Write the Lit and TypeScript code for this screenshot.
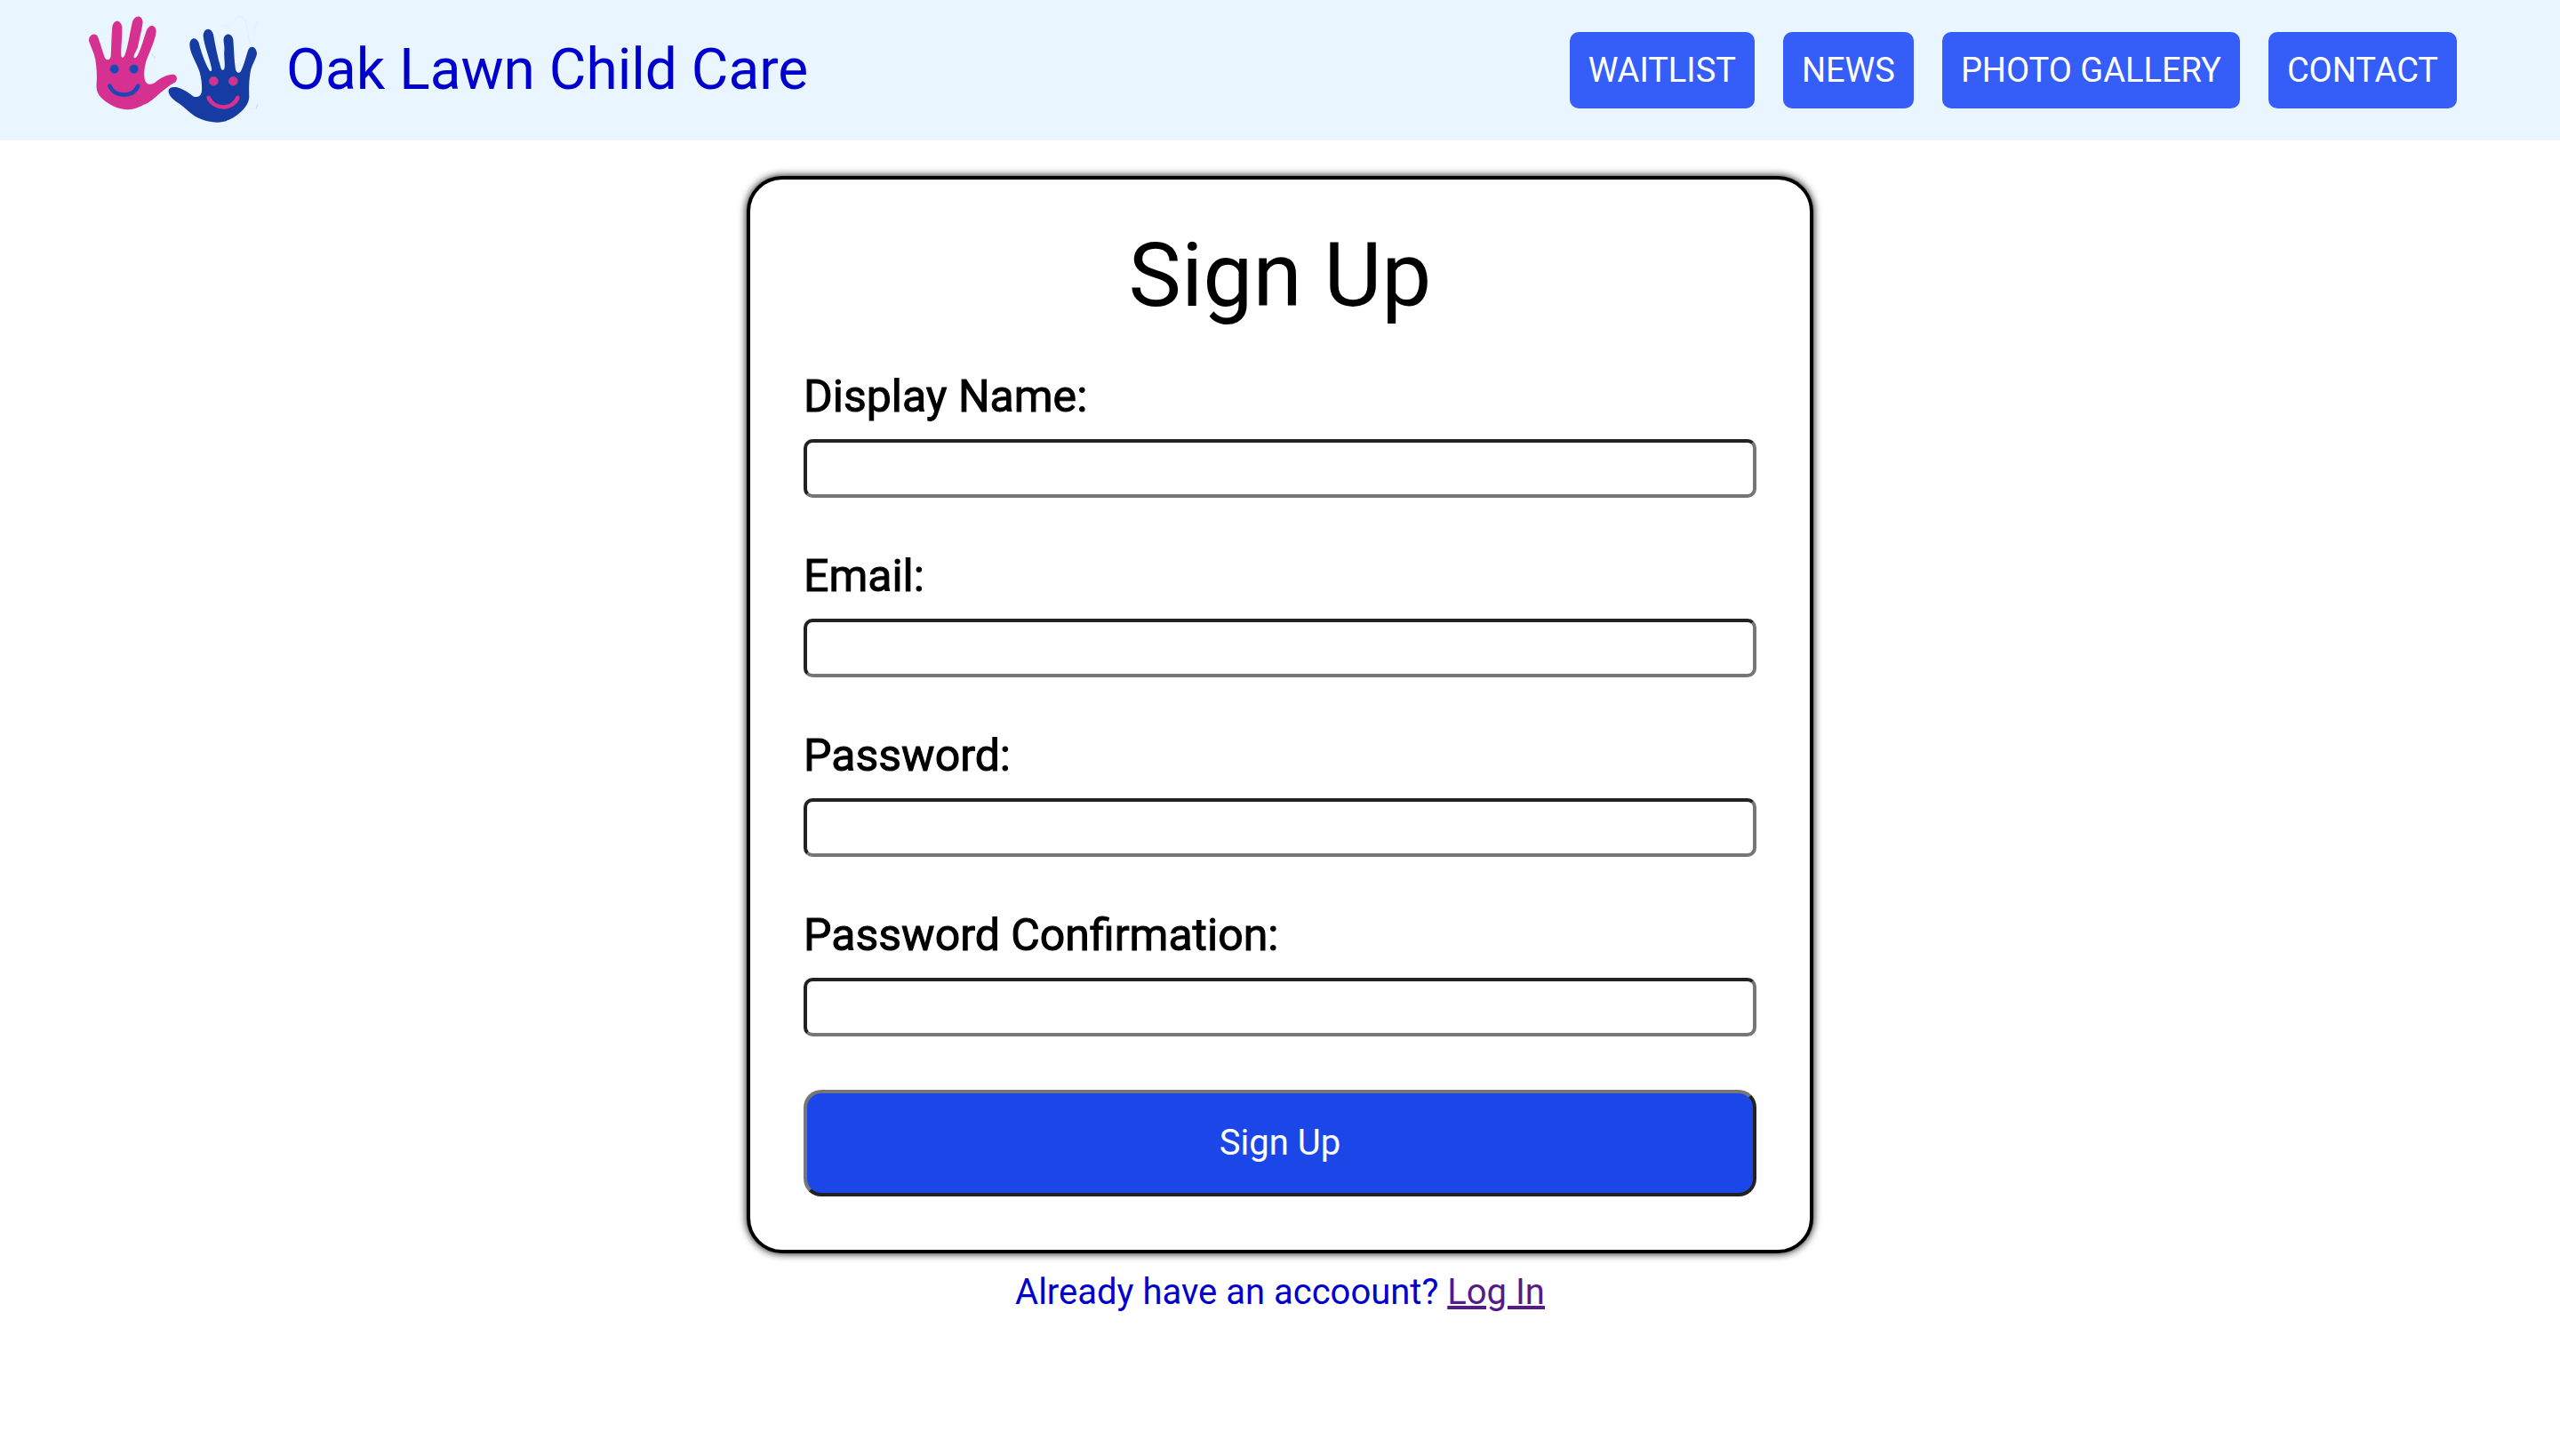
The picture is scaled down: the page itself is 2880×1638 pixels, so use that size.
import { LitElement, html, css } from "lit";
import { customElement } from "lit/decorators.js";

interface Field {
  id: string;
  label: string;
  type: string;
}

@customElement("hands-logo")
export class HandsLogo extends LitElement {
  static styles = css`
    :host {
      display: block;
    }
    .art {
      display: block;
      width: 204px;
      height: 142px;
    }
    .pink {
      fill: #d63091;
    }
    .blue {
      fill: #163ba2;
    }
    .eye-blue {
      fill: #1d47b8;
      stroke: #6a4fa0;
      stroke-width: 2;
    }
    .eye-pink {
      fill: #d63091;
      stroke: #7d5a9a;
      stroke-width: 2;
    }
    .smile {
      fill: none;
      stroke-width: 14;
      stroke-linecap: round;
    }
    .smile-blue {
      stroke: #1d47b8;
    }
    .smile-pink {
      stroke: #d63091;
    }
    .wisp {
      fill: none;
      stroke: #dcebf5;
      stroke-width: 2;
    }
    .mark {
      fill: none;
      stroke: #b4c1c9;
      stroke-width: 2;
    }
  `;

  render() {
    return html`
      <svg class="art" viewBox="48 24 612 426" aria-hidden="true">
        <path class="wisp" d="M552 72C556 50 582 46 590 78C594 108 600 130 607 154M514 86Q526 84 534 98M629 72Q612 92 624 116M602 367H622" />
        <path class="mark" d="M272 181L284 196M629 352L625 367" />
        <path
          class="pink"
          d="M60 138C58 118 82 106 90 124C98 144 104 168 112 190C116 206 131 206 134 190C136 160 136 120 139 92C142 64 170 64 172 94C173 124 168 160 169 188C171 198 178 194 181 186C192 160 198 110 206 78C212 50 240 46 242 76C238 104 230 136 224 162C216 180 211 184 212 194C216 200 222 192 226 184C238 158 246 128 254 104C262 80 288 82 287 108C282 142 264 176 254 204C246 232 246 248 248 266C252 286 268 288 282 280C300 262 324 252 344 251C358 252 362 270 350 278C334 286 318 300 300 314C282 330 266 346 244 354C220 366 206 370 188 370C156 368 128 354 106 334C88 318 84 300 86 282C88 258 86 228 82 202C78 178 66 158 60 138Z"
        />
        <path
          class="blue"
          d="M330 314C324 298 340 292 358 295C378 300 394 312 414 326C430 330 440 322 441 306C442 284 440 268 434 244C426 214 402 184 400 152C400 126 422 122 431 144C438 172 450 210 466 236C471 244 476 240 474 230C468 196 450 158 446 122C446 92 474 90 480 116C486 150 494 190 504 224C507 240 516 240 518 228C520 210 515 190 517 172C519 154 513 142 515 130C520 108 544 112 547 134C550 168 550 204 555 234C559 248 568 250 575 236C586 212 590 190 597 170C606 148 627 160 627 182C622 204 608 222 605 244C600 272 600 302 601 326C600 348 588 364 568 382C548 400 522 412 494 413C466 412 440 404 418 392C398 378 382 362 366 350C350 340 334 328 330 314Z"
        />
        <circle class="eye-blue" cx="146" cy="233" r="15" />
        <circle class="eye-blue" cx="212" cy="233" r="15" />
        <path class="smile smile-blue" d="M130 290C148 330 210 330 226 290" />
        <circle class="eye-pink" cx="481" cy="274" r="15" />
        <circle class="eye-pink" cx="547" cy="274" r="15" />
        <path class="smile smile-pink" d="M464 330C484 372 544 372 562 330" />
      </svg>
    `;
  }
}

@customElement("site-header")
export class SiteHeader extends LitElement {
  static styles = css`
    :host {
      display: block;
    }
    .bar {
      display: flex;
      align-items: center;
      justify-content: space-between;
      padding: 8px 116px 8px 96px;
      background: #e9f6ff;
    }
    .brand {
      display: flex;
      align-items: center;
      gap: 22px;
      color: #0000cd;
      font-size: 64px;
      line-height: 76px;
      text-decoration: none;
    }
    .nav {
      display: flex;
      gap: 32px;
    }
    .item {
      padding: 20px 21px;
      border-radius: 10px;
      background: #345ef7;
      color: #fff;
      font-size: 38px;
      line-height: 46px;
      text-decoration: none;
    }
  `;

  private items = ["WAITLIST", "NEWS", "PHOTO GALLERY", "CONTACT"];

  render() {
    return html`
      <header class="bar">
        <a class="brand" href="#">
          <hands-logo></hands-logo>
          <span>Oak Lawn Child Care</span>
        </a>
        <nav class="nav">
          ${this.items.map((item) => html`<a class="item" href="#">${item}</a>`)}
        </nav>
      </header>
    `;
  }
}

@customElement("sign-up-form")
export class SignUpForm extends LitElement {
  static styles = css`
    :host {
      display: block;
    }
    .card {
      display: flex;
      flex-direction: column;
      gap: 60px;
      padding: 60px;
      border: 4px solid #000;
      border-radius: 40px;
      background: #fff;
      box-shadow: 0 0 10px #000;
    }
    .title {
      margin: 0;
      font-size: 100px;
      font-weight: 400;
      line-height: 96px;
      text-align: center;
    }
    .field {
      display: flex;
      flex-direction: column;
      gap: 20px;
    }
    .label {
      font-size: 50px;
      line-height: 56px;
      -webkit-text-stroke: 1px currentColor;
    }
    .input {
      box-sizing: border-box;
      width: 100%;
      height: 66px;
      padding: 4px 12px;
      border: 4px solid;
      border-color: #222 #767676 #767676 #222;
      border-radius: 10px;
      background: #fff;
      font: inherit;
      font-size: 40px;
    }
    .submit {
      padding: 32px;
      border: 4px solid;
      border-color: #767676 #222 #222 #767676;
      border-radius: 20px;
      background: #1b47e9;
      color: #fff;
      font: inherit;
      font-size: 40px;
      line-height: 48px;
    }
  `;

  private fields: Field[] = [
    { id: "display-name", label: "Display Name:", type: "text" },
    { id: "email", label: "Email:", type: "email" },
    { id: "password", label: "Password:", type: "password" },
    { id: "password-confirmation", label: "Password Confirmation:", type: "password" },
  ];

  render() {
    return html`
      <form class="card" @submit=${(e: Event) => e.preventDefault()}>
        <h1 class="title">Sign Up</h1>
        ${this.fields.map(
          (f) => html`
            <div class="field">
              <label class="label" for=${f.id}>${f.label}</label>
              <input class="input" id=${f.id} name=${f.id} type=${f.type} />
            </div>
          `
        )}
        <button class="submit" type="submit">Sign Up</button>
      </form>
    `;
  }
}

@customElement("app-root")
export class AppRoot extends LitElement {
  static styles = css`
    :host {
      display: block;
      font-family: Roboto, "Liberation Sans", sans-serif;
      color: #000;
    }
    .main {
      display: flex;
      flex-direction: column;
      align-items: center;
      gap: 20px;
      padding: 40px 20px;
    }
    .form {
      width: 100%;
      max-width: 1200px;
    }
    .switch {
      margin: 0;
      color: #0000cd;
      font-size: 40px;
      line-height: 47px;
    }
    .link {
      color: #551a8b;
    }
  `;

  render() {
    return html`
      <site-header></site-header>
      <main class="main">
        <sign-up-form class="form"></sign-up-form>
        <p class="switch">Already have an accoount? <a class="link" href="#">Log In</a></p>
      </main>
    `;
  }
}
